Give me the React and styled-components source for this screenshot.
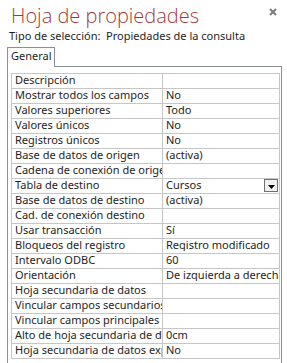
import React from "react";
import styled, { createGlobalStyle } from "styled-components";

const colors = {
  title: "#a4373a",
  text: "#1e1e1e",
  panelBorder: "#8a8e96",
  gridLine: "#c6c6c6",
  close: "#7c7c7c",
};

const rows = [
  ["Descripción", ""],
  ["Mostrar todos los campos", "No"],
  ["Valores superiores", "Todo"],
  ["Valores únicos", "No"],
  ["Registros únicos", "No"],
  ["Base de datos de origen", "(activa)"],
  ["Cadena de conexión de origen", ""],
  ["Tabla de destino", "Cursos", true],
  ["Base de datos de destino", "(activa)"],
  ["Cad. de conexión destino", ""],
  ["Usar transacción", "Sí"],
  ["Bloqueos del registro", "Registro modificado"],
  ["Intervalo ODBC", "60"],
  ["Orientación", "De izquierda a derecha"],
  ["Hoja secundaria de datos", ""],
  ["Vincular campos secundarios", ""],
  ["Vincular campos principales", ""],
  ["Alto de hoja secundaria de datos", "0cm"],
  ["Hoja secundaria de datos expandida", "No"],
];

const GlobalStyle = createGlobalStyle`
  body {
    margin: 0;
    background: #fff;
  }
`;

const App = () => {
  return (
    <Root>
      <GlobalStyle />
      <Header>
        <Title>Hoja de propiedades</Title>
        <CloseButton aria-label="Cerrar">
          <svg width="8" height="8" viewBox="0 0 8 8">
            <path d="M1 1 L7 7 M7 1 L1 7" stroke={colors.close} strokeWidth="2" />
          </svg>
        </CloseButton>
      </Header>
      <Selection>
        Tipo de selección:&nbsp;&nbsp;Propiedades de la consulta
      </Selection>
      <Tabs>
        <Tab>General</Tab>
      </Tabs>
      <Panel>
        <Grid>
          {rows.map(([label, value, combo]) => (
            <Row key={label}>
              <Cell>{label}</Cell>
              <Cell>
                <CellText>{value}</CellText>
                {combo && (
                  <ComboButton>
                    <svg width="7" height="4" viewBox="0 0 7 4">
                      <path d="M0 0 H7 L3.5 4 Z" fill="#000" />
                    </svg>
                  </ComboButton>
                )}
              </Cell>
            </Row>
          ))}
        </Grid>
      </Panel>
    </Root>
  );
};

const Root = styled.div`
  display: flex;
  flex-direction: column;
  width: 287px;
  height: 363px;
  overflow: hidden;
  font-family: "Noto Sans", sans-serif;
  color: ${colors.text};
`;

const Header = styled.div`
  display: flex;
  flex-direction: row;
  align-items: flex-start;
  justify-content: space-between;
  box-sizing: border-box;
  height: 28px;
  padding: 3px 10px 0 11px;
`;

const Title = styled.h1`
  margin: 0;
  font-family: "Open Sans", sans-serif;
  font-weight: 300;
  font-size: 20px;
  line-height: 26px;
  color: ${colors.title};
`;

const CloseButton = styled.button`
  display: flex;
  padding: 0;
  margin-top: 5px;
  background: inherit;
  border: none;
`;

const Selection = styled.div`
  padding-left: 9px;
  height: 16px;
  font-size: 11px;
  line-height: 16px;
  white-space: nowrap;
`;

const Tabs = styled.div`
  display: flex;
  padding: 3px 0 0 7px;
`;

const Tab = styled.div`
  position: relative;
  z-index: 1;
  box-sizing: border-box;
  width: 48px;
  height: 20px;
  margin-bottom: -1px;
  padding: 0 0 0 3px;
  font-size: 11px;
  line-height: 15px;
  background: #fff;
  border: 1px solid ${colors.panelBorder};
  border-bottom: none;
`;

const Panel = styled.div`
  flex: 1;
  box-sizing: border-box;
  width: 275px;
  margin-left: 7px;
  padding: 6px 0 0 3px;
  border: 1px solid ${colors.panelBorder};
  border-bottom: none;
`;

const Grid = styled.div`
  display: flex;
  flex-direction: column;
  width: 269px;
  box-sizing: border-box;
  border-top: 1px solid ${colors.gridLine};
  border-left: 1px solid ${colors.gridLine};
`;

const Row = styled.div`
  display: grid;
  grid-template-columns: 151px 117px;
  height: 15px;
`;

const Cell = styled.div`
  display: flex;
  align-items: flex-start;
  box-sizing: border-box;
  min-width: 0;
  padding-left: 3px;
  font-size: 11px;
  line-height: 12px;
  white-space: nowrap;
  overflow: hidden;
  border-right: 1px solid ${colors.gridLine};
  border-bottom: 1px solid ${colors.gridLine};
`;

const CellText = styled.span`
  flex: 1;
  overflow: hidden;
`;

const ComboButton = styled.div`
  display: flex;
  align-items: flex-end;
  justify-content: center;
  box-sizing: border-box;
  width: 14px;
  height: 13px;
  margin-right: 1px;
  padding-bottom: 2px;
  background: #f0f0f0;
  border: 1px solid #707070;
`;

export default App;
